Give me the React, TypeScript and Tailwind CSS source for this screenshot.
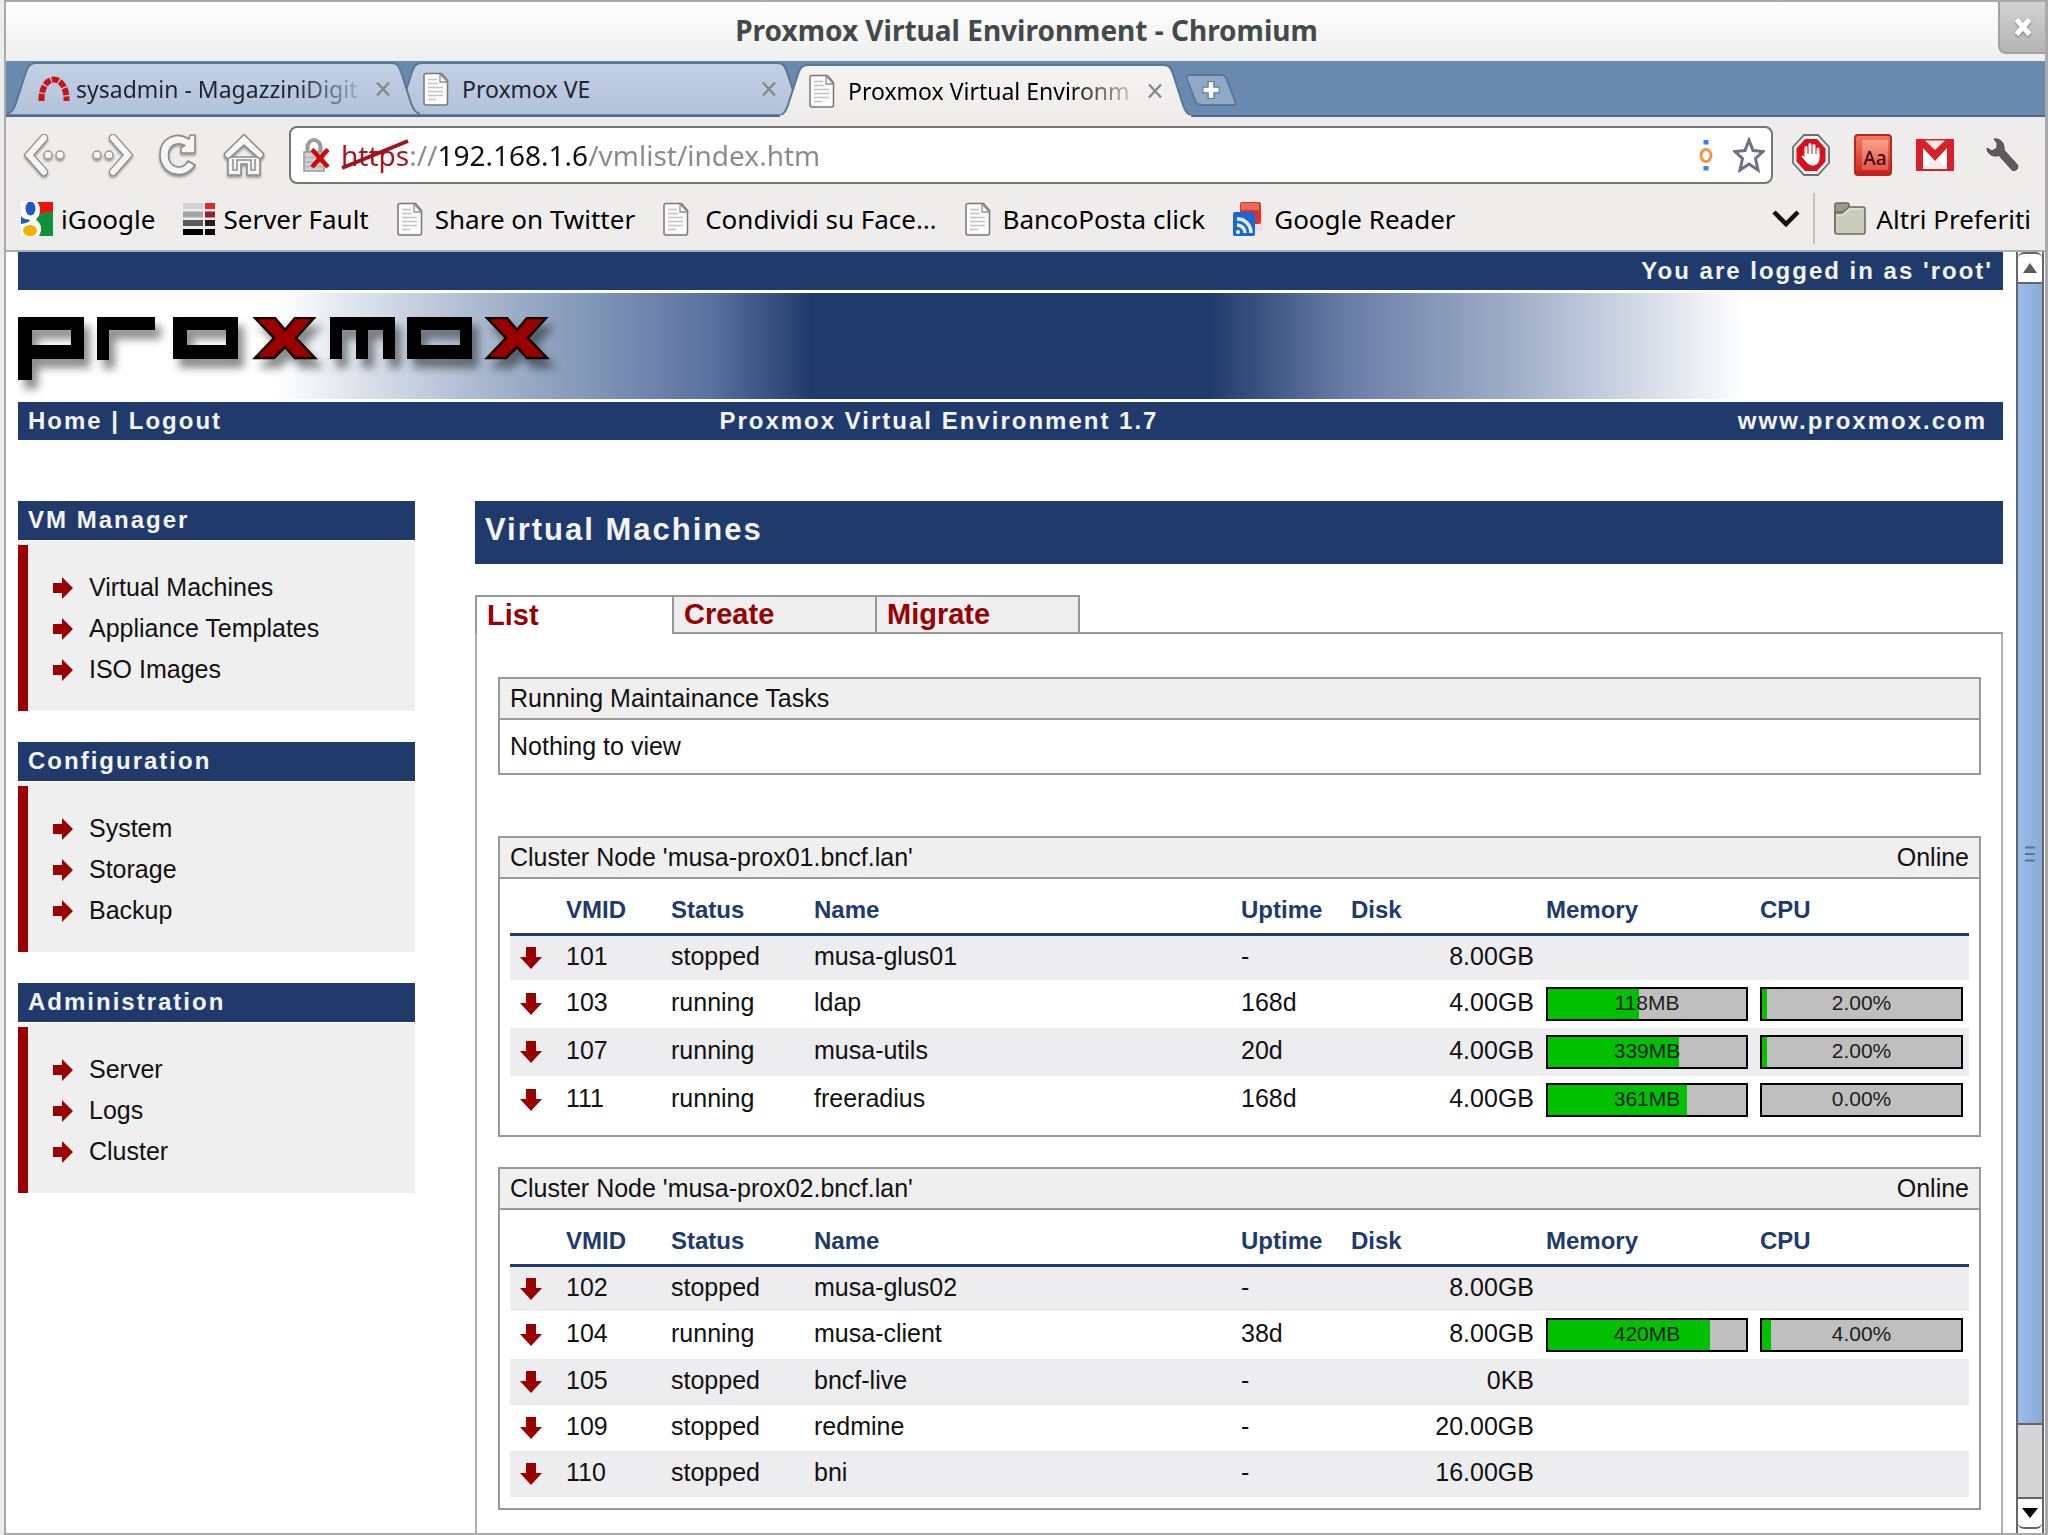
import React from "react";

type Vm = {
  id: string;
  status: string;
  name: string;
  uptime: string;
  disk: string;
  mem?: { label: string; pct: number };
  cpu?: { label: string; pct: number };
};

const node1: Vm[] = [
  { id: "101", status: "stopped", name: "musa-glus01", uptime: "-", disk: "8.00GB" },
  { id: "103", status: "running", name: "ldap", uptime: "168d", disk: "4.00GB", mem: { label: "118MB", pct: 46 }, cpu: { label: "2.00%", pct: 2.5 } },
  { id: "107", status: "running", name: "musa-utils", uptime: "20d", disk: "4.00GB", mem: { label: "339MB", pct: 66 }, cpu: { label: "2.00%", pct: 2.5 } },
  { id: "111", status: "running", name: "freeradius", uptime: "168d", disk: "4.00GB", mem: { label: "361MB", pct: 70 }, cpu: { label: "0.00%", pct: 0 } },
];

const node2: Vm[] = [
  { id: "102", status: "stopped", name: "musa-glus02", uptime: "-", disk: "8.00GB" },
  { id: "104", status: "running", name: "musa-client", uptime: "38d", disk: "8.00GB", mem: { label: "420MB", pct: 82 }, cpu: { label: "4.00%", pct: 4.3 } },
  { id: "105", status: "stopped", name: "bncf-live", uptime: "-", disk: "0KB" },
  { id: "109", status: "stopped", name: "redmine", uptime: "-", disk: "20.00GB" },
  { id: "110", status: "stopped", name: "bni", uptime: "-", disk: "16.00GB" },
];

const menus = [
  { title: "VM Manager", items: ["Virtual Machines", "Appliance Templates", "ISO Images"] },
  { title: "Configuration", items: ["System", "Storage", "Backup"] },
  { title: "Administration", items: ["Server", "Logs", "Cluster"] },
];

function PageIcon() {
  return (
    <svg viewBox="0 0 26 34" className="h-[34px] w-[26px] shrink-0" aria-hidden="true">
      <path d="M3 1.500h15.500l6 7v22.500a2 2 0 0 1-2 2h-19.500a2 2 0 0 1-2-2v-27.500a2 2 0 0 1 2-2z" fill="#fbfbfb" stroke="#77777b" strokeWidth="1.500" />
      <path d="M17 2v8h7.500z" fill="#ffffff" stroke="#909090" strokeWidth="1.300" />
      <path d="M5 7.500h9M5 11.500h10M5 15.500h15M5 19.500h15M5 23.500h15M5 27.500h8" stroke="#c4c4c6" strokeWidth="1.600" />
    </svg>
  );
}

function Cross({ className }: { className: string }) {
  return (
    <svg viewBox="0 0 16 16" className={className} aria-hidden="true">
      <path d="M2 1.500L14 14.500M14 1.500L2 14.500" stroke="currentColor" strokeWidth="2.400" />
    </svg>
  );
}

function RedmineIcon() {
  return (
    <svg viewBox="0 0 34 26" className="h-[26px] w-[34px] shrink-0" aria-hidden="true">
      <path d="M4.500 25C4 12 10 3.500 17 3.500S30 12 29.500 25" fill="none" stroke="#c8141c" strokeWidth="6" strokeDasharray="7 1.400" />
    </svg>
  );
}

function TabShape({ active }: { active: boolean }) {
  return (
    <svg viewBox="0 0 415 54" preserveAspectRatio="none" className="absolute inset-0 h-full w-full" aria-hidden="true">
      <defs>
        <linearGradient id={active ? "tabOn" : "tabOff"} x1="0" y1="0" x2="0" y2="1">
          <stop offset="0" stopColor={active ? "#f4f4f3" : "#c3d1e5"} />
          <stop offset="1" stopColor={active ? "#efedec" : "#b2c2d9"} />
        </linearGradient>
      </defs>
      <path
        d="M1 53C6 52 8 48 10 42L20 11C22 5 24 2 30 2H386C391 2 393 5 395 11L405 42C407 48 409 52 414 53"
        fill={active ? "url(#tabOn)" : "url(#tabOff)"}
        stroke="#5d7595"
        strokeWidth="2"
      />
      {active && <path d="M2 53.500H413" stroke="#efedec" strokeWidth="2.500" />}
    </svg>
  );
}

function BrowserTab({ title, icon, active = false, faded = false, z }: { title: string; icon: React.ReactNode; active?: boolean; faded?: boolean; z: string }) {
  return (
    <div className={"relative -mr-[29px] h-[54px] w-[415px] shrink-0 " + z}>
      <TabShape active={active} />
      <div className="relative flex h-full items-center pt-0.5 pr-[28px] pl-[31px]">
        <button type="button" role="tab" aria-selected={active} className="flex min-w-0 flex-1 items-center text-left">
          <span className="flex w-[39px] shrink-0">{icon}</span>
          <span
            className={
              "whitespace-nowrap text-[23px] leading-8 " +
              (active ? "text-black " : "text-[#1c2433] ") +
              (faded ? "[mask-image:linear-gradient(to_right,black_78%,rgb(0_0_0/0.2)_100%)]" : "")
            }
          >
            {title}
          </span>
        </button>
        <button type="button" aria-label={"Close " + title} className="ml-3 flex w-5 shrink-0 justify-center text-[#85898f]">
          <Cross className="h-4 w-4" />
        </button>
      </div>
    </div>
  );
}

const navShadow = "drop-shadow-[0_2px_1px_rgba(0,0,0,0.35)]";

function BackIcon({ flip = false }: { flip?: boolean }) {
  return (
    <svg viewBox="0 0 42 42" className={"h-[42px] w-[42px] " + navShadow + (flip ? " -scale-x-100" : "")} aria-hidden="true">
      <path d="M20 4L5 21L20 38" fill="none" stroke="#8c8c8c" strokeWidth="8.500" strokeLinecap="round" />
      <path d="M20 4L5 21L20 38" fill="none" stroke="#f5f5f5" strokeWidth="6" strokeLinecap="round" />
      <circle cx="24" cy="21" r="4" fill="#f5f5f5" stroke="#9a9a9a" strokeWidth="1.500" />
      <circle cx="36" cy="21" r="4" fill="#f5f5f5" stroke="#9a9a9a" strokeWidth="1.500" />
    </svg>
  );
}

function ReloadIcon() {
  return (
    <svg viewBox="0 0 40 44" className={"h-[44px] w-[40px] " + navShadow} aria-hidden="true">
      <path
        d="M37 2V20H23V14.500L27 12.500C18 8 10.500 13 10.500 22.500C10.500 34 24 38.500 30 28L37 32C27 49 2 42 2 22C2 4 19-2 31 6L32 2Z"
        fill="#f5f5f5"
        stroke="#8c8c8c"
        strokeWidth="1.600"
        strokeLinejoin="round"
      />
    </svg>
  );
}

function HomeIcon() {
  return (
    <svg viewBox="0 0 42 44" className={"h-[44px] w-[42px] " + navShadow} aria-hidden="true">
      <path d="M5 24H37V42H24V31H18V42H5Z" fill="#f5f5f5" stroke="#8c8c8c" strokeWidth="1.600" />
      <path d="M10 26V37H14V27H28V37H32V26" fill="none" stroke="#8c8c8c" strokeWidth="1.500" />
      <path d="M21 1.500L40 20C42 23 38 27 35 24.500L21 12L7 24.500C4 27 0 23 2 20Z" fill="#f7f7f7" stroke="#8c8c8c" strokeWidth="1.600" strokeLinejoin="round" />
    </svg>
  );
}

function BrokenLock() {
  return (
    <svg viewBox="0 0 28 36" className="h-[36px] w-[28px] shrink-0" aria-hidden="true">
      <path d="M4.500 17V10a6.500 7 0 0 1 13 0V17" fill="none" stroke="#9c9c9c" strokeWidth="4" />
      <rect x="1" y="15" width="20" height="19" fill="#d2d2d2" stroke="#9a9a9a" strokeWidth="1.500" />
      <path d="M2 20.500H20M2 25H20M2 29.500H20" stroke="#b2b2b2" strokeWidth="1.500" />
      <path d="M9 12.500L25 30M25 12.500L9 30" stroke="#cc0a10" strokeWidth="4.500" />
    </svg>
  );
}

function GoogleIcon() {
  return (
    <svg viewBox="0 0 32 34" className="h-[34px] w-[32px] shrink-0" aria-hidden="true">
      <rect width="32" height="34" rx="1" fill="#ffffff" />
      <path d="M16 0H32V11C26 9 20 11 17 16C20 10 20 4 16 0Z" fill="#ee1111" />
      <path d="M32 10V34H18C22 27 20 21 15 18C18 12 25 9 32 10Z" fill="#12913c" />
      <path d="M0 14C3 18 7 17 9 18C8 21 4 21 0 22Z" fill="#2457c5" />
      <ellipse cx="9.500" cy="6.500" rx="5" ry="7" fill="#2457c5" />
      <ellipse cx="9" cy="28.500" rx="7" ry="5.500" fill="#f2b000" />
    </svg>
  );
}

function ServerFaultIcon() {
  return (
    <svg viewBox="0 0 32 32" className="h-8 w-8 shrink-0" aria-hidden="true">
      <rect x="0" y="0" width="20" height="6" fill="#cdd1d3" />
      <rect x="22" y="0" width="10" height="6" fill="#e3252f" />
      <rect x="0" y="8.500" width="20" height="6" fill="#a3a6a8" />
      <rect x="22" y="8.500" width="10" height="6" fill="#94202a" />
      <rect x="0" y="17" width="20" height="6" fill="#575a5a" />
      <rect x="22" y="17" width="10" height="6" fill="#2a1718" />
      <rect x="0" y="26" width="20" height="6" fill="#000000" />
      <rect x="22" y="26" width="10" height="6" fill="#000000" />
    </svg>
  );
}

function ReaderIcon() {
  return (
    <svg viewBox="0 0 31 34" className="h-[34px] w-[31px] shrink-0" aria-hidden="true">
      <rect x="20" y="6" width="10" height="23" fill="#e6e0e0" />
      <rect x="7" y="0" width="21" height="22" rx="2" fill="#d9362c" />
      <rect x="8" y="1" width="18" height="7" fill="#e8695c" />
      <rect x="0" y="10" width="22" height="24" rx="2" fill="#1a66d2" />
      <path d="M4 17a13 14 0 0 1 14 14M4 23a8 8 0 0 1 8 8" fill="none" stroke="#e6effb" strokeWidth="3.500" />
      <circle cx="5" cy="30" r="2" fill="#ffffff" />
    </svg>
  );
}

function FolderIcon() {
  return (
    <svg viewBox="0 0 32 34" className="h-[34px] w-[32px] shrink-0" aria-hidden="true">
      <path d="M1 30V3a2 2 0 0 1 2-2H13a2 2 0 0 1 2 2V10H1" fill="#9a9d8c" stroke="#6b6e60" strokeWidth="1.600" />
      <path d="M1 11H8L15 5H29a2 2 0 0 1 2 2V30a2 2 0 0 1-2 2H3a2 2 0 0 1-2-2Z" fill="#c9ccba" stroke="#6b6e60" strokeWidth="1.600" />
      <path d="M3 13H9L16 7H29" fill="none" stroke="#e2e4d8" strokeWidth="1.500" />
    </svg>
  );
}

function AdblockIcon() {
  return (
    <svg viewBox="0 0 38 42" className="h-[42px] w-[38px]" aria-hidden="true">
      <path d="M12 1H26L37 13V29L26 41H12L1 29V13Z" fill="#f2f2f2" stroke="#6e6e6e" strokeWidth="1.800" />
      <path d="M13 5H25L33.500 14.500V27.500L25 37H13L4.500 27.500V14.500Z" fill="#d9101c" />
      <path d="M14 21V13.500M18 20V10.500M22 20V11.500M26 22V15" stroke="#ffffff" strokeWidth="3" strokeLinecap="round" />
      <path d="M12.500 20H27.500V24C27.500 29 24.500 31.500 20.500 31.500C16 31.500 14.500 28 9.500 22.500C10.500 20.500 12 21.500 13 23Z" fill="#ffffff" />
    </svg>
  );
}

function DictionaryIcon() {
  return (
    <span className="flex h-[42px] w-[38px] items-end justify-end rounded border-2 border-[#b02a22] bg-linear-to-b from-[#f4795c] to-[#cc1c1c] pr-0.5 pb-1">
      <span className="flex h-[30px] w-[26px] items-end justify-center bg-linear-to-b from-[#f7a08e] to-[#e2564c] text-[19px] leading-6 font-medium text-[#4a0a0a]">Aa</span>
    </span>
  );
}

function GmailIcon() {
  return (
    <svg viewBox="0 0 38 32" className="h-[32px] w-[38px]" aria-hidden="true">
      <rect x="0" y="0" width="38" height="32" fill="#d8202a" />
      <path d="M7 9L19 22L31 9V30H7Z" fill="#ffffff" />
      <path d="M7 30L16 20L19 23L22 20L31 30Z" fill="#f0eeee" />
      <path d="M9 1.500H29L19 11Z" fill="#fbeaea" />
    </svg>
  );
}

function WrenchIcon() {
  return (
    <svg viewBox="0 0 34 34" className="h-[34px] w-[34px]" aria-hidden="true">
      <path d="M8 1C14 0 19 5 18 12L31.500 27C33 31 29 34 26 32L13 17.500C7 19.500 1 16 1 10L6 13L11 10L11 5Z" fill="#5d5d5f" stroke="#4b4b4d" strokeWidth="1" strokeLinejoin="round" />
    </svg>
  );
}

function StarIcon() {
  return (
    <svg viewBox="0 0 32 36" className="h-9 w-8" aria-hidden="true">
      <path d="M16 3L20 13.500L30 14.500L22.500 21.500L25 33L16 27L7 33L9.500 21.500L2 14.500L12 13.500Z" fill="#ffffff" stroke="#6d7186" strokeWidth="3" />
    </svg>
  );
}

function LocationDots() {
  return (
    <svg viewBox="0 0 14 32" className="h-8 w-[14px] shrink-0" aria-hidden="true">
      <rect x="4.500" y="1" width="5" height="4.500" fill="#3f7ff0" />
      <ellipse cx="7" cy="16.500" rx="5" ry="6" fill="#ffffff" stroke="#f79443" strokeWidth="3" />
      <rect x="4.500" y="27" width="5" height="4.500" fill="#3f7ff0" />
    </svg>
  );
}

const blackGlyphs = [
  { id: "p", d: [[0, 0, 66, 13], [0, 28, 66, 14], [0, 0, 14, 63], [53, 0, 13, 42]] },
  { id: "r", d: [[79, 0, 58, 13], [79, 0, 12, 43]] },
  { id: "o", d: [[155, 0, 65, 13], [155, 28, 65, 14], [155, 0, 14, 42], [208, 0, 12, 42]] },
  { id: "m", d: [[312, 0, 65, 13], [312, 0, 12, 42], [338, 0, 12, 42], [365, 0, 12, 42]] },
  { id: "o2", d: [[389, 0, 65, 13], [389, 28, 65, 14], [389, 0, 14, 42], [442, 0, 12, 42]] },
];

function ProxmoxLogo() {
  return (
    <svg viewBox="0 0 550 84" className="h-[84px] w-[550px] drop-shadow-[6px_9px_4px_rgba(0,0,0,0.45)]" role="img" aria-label="proxmox">
      {blackGlyphs.map((g) => g.d.map((r, i) => <rect key={g.id + i} x={r[0]} y={r[1]} width={r[2]} height={r[3]} fill="#000000" />))}
      {[236, 468].map((x) => (
        <polygon
          key={x}
          points={[[1, 1], [21, 1], [31, 13], [41, 1], [60, 1], [42, 21], [61, 41], [41, 41], [31, 30], [20, 41], [1, 41], [20, 21]].map((p) => p[0] + x + "," + p[1]).join(" ")}
          fill="#9b0000"
          stroke="#120000"
          strokeWidth="2.500"
        />
      ))}
    </svg>
  );
}

function ArrowRight() {
  return (
    <svg viewBox="0 0 20 22" className="h-[22px] w-5 shrink-0" aria-hidden="true">
      <path d="M0 6H9V0L20 11L9 22V16H0Z" fill="#990000" />
    </svg>
  );
}

function ArrowDown() {
  return (
    <svg viewBox="0 0 22 22" className="h-[22px] w-[22px]" aria-hidden="true">
      <path d="M6 0V10H0L11 22L22 10H16V0Z" fill="#990000" />
    </svg>
  );
}

function Meter({ label, pct }: { label: string; pct: number }) {
  return (
    <div className="relative h-[34px] border-2 border-black bg-[#c0bfc0]" role="meter" aria-valuenow={pct} aria-valuemin={0} aria-valuemax={100} aria-label={label}>
      <div className="h-full bg-[#00c000]" style={{ width: pct + "%" }} />
      <span className="absolute inset-0 text-center text-[21px] leading-7 text-[#1c1c1c]">{label}</span>
    </div>
  );
}

function ClusterNode({ name, vms }: { name: string; vms: Vm[] }) {
  return (
    <section className="mb-[30px] border-2 border-[#9a999a] last:mb-[22px]">
      <header className="flex h-[41px] items-center justify-between border-b-2 border-[#9a999a] bg-[#f0eff0] px-2.5 pb-0.5">
        <h2>Cluster Node '{name}'</h2>
        <span>Online</span>
      </header>
      <div className="px-2.5 pb-[11px]">
        <table className="w-full table-fixed border-collapse">
          <colgroup>
            <col className="w-14" />
            <col className="w-[105px]" />
            <col className="w-[143px]" />
            <col />
            <col className="w-[110px]" />
            <col className="w-[195px]" />
            <col className="w-[214px]" />
            <col className="w-[209px]" />
          </colgroup>
          <thead>
            <tr className="h-[55px] border-b-3 border-[#203a6b] text-left text-[24px] text-[#203a6b] [&>th]:pt-2">
              <th aria-label="Menu" />
              <th>VMID</th>
              <th>Status</th>
              <th>Name</th>
              <th>Uptime</th>
              <th>Disk</th>
              <th>Memory</th>
              <th>CPU</th>
            </tr>
          </thead>
          <tbody>
            {vms.map((vm, i) => (
              <tr key={vm.id} className={(vm.mem ? "h-12 " : "h-[46px] ") + (i % 2 === 0 ? "bg-[#edecee]" : "")}>
                <td className="pl-2.5">
                  <button type="button" aria-label={"Menu for " + vm.name} className="block">
                    <ArrowDown />
                  </button>
                </td>
                <td className="pb-1">{vm.id}</td>
                <td className="pb-1">{vm.status}</td>
                <td className="pb-1">{vm.name}</td>
                <td className="pb-1">{vm.uptime}</td>
                <td className="pr-3 pb-1 text-right">{vm.disk}</td>
                <td className="pr-3">{vm.mem && <Meter label={vm.mem.label} pct={vm.mem.pct} />}</td>
                <td className="pr-1.5">{vm.cpu && <Meter label={vm.cpu.label} pct={vm.cpu.pct} />}</td>
              </tr>
            ))}
          </tbody>
        </table>
      </div>
    </section>
  );
}

function Bookmark({ icon, label, className }: { icon: React.ReactNode; label: string; className: string }) {
  return (
    <a href="#" className={"flex shrink-0 items-center whitespace-nowrap " + className}>
      {icon}
      {label}
    </a>
  );
}

function BrowserChrome() {
  return (
    <div className="font-['Noto_Sans',sans-serif] text-black">
      <div className="flex h-[61px] items-start border-t-2 border-[#a8a8a8] bg-linear-to-b from-white to-[#eeeeee]">
        <div className="w-[49px]" />
        <h1 className="flex-1 text-center text-[28px] leading-[56px] font-bold text-[#444a4a]">Proxmox Virtual Environment - Chromium</h1>
        <button type="button" aria-label="Close window" className="flex h-[52px] w-[47px] items-center justify-center rounded-bl-lg border-b-2 border-l-2 border-[#a2a2a2] bg-linear-to-b from-[#d2d2d2] to-[#b4b4b4] text-white">
          <svg viewBox="0 0 18 20" className="h-5 w-[18px] drop-shadow-[0_1px_1px_rgba(0,0,0,0.4)]" aria-hidden="true">
            <path d="M2.500 2.500L15.500 17.500M15.500 2.500L2.500 17.500" stroke="currentColor" strokeWidth="5" />
          </svg>
        </button>
      </div>

      <div role="tablist" className="flex h-14 items-end border-b-2 border-[#53658a] bg-[#698aae]">
        <BrowserTab z="z-20" title="sysadmin - MagazziniDigit" icon={<RedmineIcon />} faded />
        <BrowserTab z="z-10" title="Proxmox VE" icon={<PageIcon />} />
        <BrowserTab z="z-30 -mb-0.5" title="Proxmox Virtual Environm" icon={<PageIcon />} active faded />
        <button type="button" aria-label="New tab" className="mb-[9px] ml-[22px] h-8 w-[51px] shrink-0">
          <svg viewBox="0 0 51 32" className="h-8 w-[51px]" aria-hidden="true">
            <path d="M4 1H35C38 1 40 3 41 6L49 27C50 30 49 31 46 31H16C12 31 10 29 9 26L1 5C0 2 1 1 4 1Z" fill="#8fa9c8" stroke="#5b7597" strokeWidth="1.800" />
            <path d="M25 7V25M16.500 16H33.500" stroke="#5f7897" strokeWidth="7" />
            <path d="M25 8V24M17.500 16H32.500" stroke="#ffffff" strokeWidth="4.500" />
          </svg>
        </button>
      </div>

      <div className="flex h-[76px] items-center bg-[#efedec] pr-[25px] pl-[18px]">
        <div className="flex shrink-0 items-center gap-[25px]">
          <button type="button" aria-label="Back"><BackIcon /></button>
          <button type="button" aria-label="Forward"><BackIcon flip /></button>
          <button type="button" aria-label="Reload"><ReloadIcon /></button>
          <button type="button" aria-label="Home"><HomeIcon /></button>
        </div>
        <div className="ml-6 flex h-[58px] min-w-0 flex-1 items-center rounded-lg border-2 border-[#777576] bg-white pr-1.5 pl-3">
          <BrokenLock />
          <div className="relative ml-2.5 min-w-0 flex-1">
            <input
              aria-label="Address"
              defaultValue="https://192.168.1.6/vmlist/index.htm"
              className="block h-11 w-full bg-transparent bg-[linear-gradient(to_right,#a8141e_68px,#8a8a8a_68px,#8a8a8a_96px,#111111_96px,#111111_247px,#8a8a8a_247px)] bg-clip-text text-[28px] leading-[44px] text-transparent caret-black outline-none"
            />
            <svg viewBox="0 0 68 34" className="pointer-events-none absolute top-1 left-0 h-[34px] w-[68px]" aria-hidden="true">
              <path d="M1 31L67 4" stroke="#a3121c" strokeWidth="4" />
            </svg>
          </div>
          <LocationDots />
          <button type="button" aria-label="Bookmark this page" className="ml-5 shrink-0"><StarIcon /></button>
        </div>
        <div className="ml-[19px] flex shrink-0 items-center gap-6">
          <button type="button" aria-label="AdBlock"><AdblockIcon /></button>
          <button type="button" aria-label="Dictionary"><DictionaryIcon /></button>
          <button type="button" aria-label="Gmail"><GmailIcon /></button>
          <button type="button" aria-label="Settings" className="ml-2"><WrenchIcon /></button>
        </div>
      </div>

      <nav aria-label="Bookmarks" className="flex h-[59px] items-center border-b-2 border-[#acacac] bg-[#efedec] pr-3.5 pb-1.5 pl-[15px] text-[26px] leading-8">
        <Bookmark className="gap-2" icon={<GoogleIcon />} label="iGoogle" />
        <Bookmark className="ml-7 gap-2" icon={<ServerFaultIcon />} label="Server Fault" />
        <Bookmark className="ml-7 gap-3" icon={<PageIcon />} label="Share on Twitter" />
        <Bookmark className="ml-7 gap-4" icon={<PageIcon />} label="Condividi su Face…" />
        <Bookmark className="ml-7 gap-3" icon={<PageIcon />} label="BancoPosta click" />
        <Bookmark className="ml-7 gap-2.5" icon={<ReaderIcon />} label="Google Reader" />
        <button type="button" aria-label="More bookmarks" className="ml-auto shrink-0">
          <svg viewBox="0 0 28 18" className="h-[18px] w-7" aria-hidden="true">
            <path d="M2 2L14 14L26 2" fill="none" stroke="#111111" strokeWidth="4.500" />
          </svg>
        </button>
        <div className="mr-[19px] ml-[13px] h-[51px] w-0.5 bg-[#c4c2c1]" />
        <Bookmark className="gap-2.5" icon={<FolderIcon />} label="Altri Preferiti" />
      </nav>
    </div>
  );
}

function Scrollbar() {
  return (
    <div className="mr-px ml-[13px] flex w-7 shrink-0 flex-col border-x-2 border-[#63666c] pb-1">
      <button type="button" aria-label="Scroll up" className="flex h-8 items-center justify-center rounded-t-md border-y-2 border-[#63666c] bg-white">
        <svg viewBox="0 0 14 10" className="h-2.5 w-3.5" aria-hidden="true"><path d="M7 0L14 10H0Z" fill="#5b5b5b" /></svg>
      </button>
      <div className="flex flex-1 items-center justify-center bg-linear-to-r from-[#9bbdea] to-[#88aad6]">
        <svg viewBox="0 0 10 16" className="h-4 w-2.5" aria-hidden="true"><path d="M0 1.500H10M0 8H10M0 14.500H10" stroke="#56759f" strokeWidth="2" /></svg>
      </div>
      <div className="h-[74px] border-t-2 border-[#63666c] bg-[#d6d4d5]" />
      <button type="button" aria-label="Scroll down" className="flex h-8 items-center justify-center rounded-b-md border-y-2 border-[#63666c] bg-white">
        <svg viewBox="0 0 16 10" className="h-2.5 w-4" aria-hidden="true"><path d="M0 0H16L8 10Z" fill="#000000" /></svg>
      </button>
    </div>
  );
}

const pageTabs = ["List", "Create", "Migrate"];

export default function App() {
  return (
    <div className="flex min-h-screen flex-col bg-[#ececec] pl-1">
      <div className="flex flex-1 flex-col border-r-3 border-b-2 border-l-2 border-[#a9a8ab] bg-white">
        <BrowserChrome />
        <div className="flex flex-1 font-['Liberation_Sans',Arial,sans-serif] text-[25px] leading-7 text-[#111111]">
          <div className="flex min-w-0 flex-1 flex-col pl-3">
            <div className="h-[38px] bg-[#203a6b] pr-2.5 text-right text-[24px] leading-[38px] font-bold tracking-[2px] text-[#f2f4f8]">You are logged in as 'root'</div>
            <div className="my-[3px] h-[106px] bg-[linear-gradient(to_right,#ffffff_13%,#94a7c2_26%,#5a719f_35%,#203a6b_40%,#203a6b_60%,#6a7da6_67%,#a4b2ca_76%,#ffffff_87%)] pt-6">
              <ProxmoxLogo />
            </div>
            <div className="grid h-[38px] grid-cols-[30fr_33fr_37fr] bg-[#203a6b] pr-4 pl-2.5 text-[24px] leading-[38px] font-bold tracking-[2px] whitespace-nowrap text-[#f2f4f8]">
              <div>
                <a href="#">Home</a> | <a href="#">Logout</a>
              </div>
              <div className="text-center">Proxmox Virtual Environment 1.7</div>
              <a href="#" className="text-right">www.proxmox.com</a>
            </div>

            <div className="mt-[61px] flex flex-1 gap-[60px]">
              <nav aria-label="Main" className="w-[397px] shrink-0">
                {menus.map((menu) => (
                  <section key={menu.title} className="mb-[31px]">
                    <h2 className="h-[39px] bg-[#203a6b] pl-2.5 text-[24px] leading-[38px] font-bold tracking-[2px] text-[#f2f4f8]">{menu.title}</h2>
                    <div className="mt-px bg-[#f0eff0] pt-1">
                      <ul className="border-l-10 border-[#990000] pt-[22px] pb-[21px] pl-[25px]">
                        {menu.items.map((item) => (
                          <li key={item}>
                            <a href="#" className="flex h-[41px] items-center gap-4">
                              <ArrowRight />
                              <span className="pb-0.5">{item}</span>
                            </a>
                          </li>
                        ))}
                      </ul>
                    </div>
                  </section>
                ))}
              </nav>

              <main className="flex min-w-0 flex-1 flex-col">
                <h1 className="h-[63px] bg-[#203a6b] pl-2.5 text-[31px] leading-[58px] font-bold tracking-[2px] text-[#f2f4f8]">Virtual Machines</h1>
                <div role="tablist" className="mt-[31px] flex h-[39px]">
                  {pageTabs.map((tab, i) => (
                    <button
                      key={tab}
                      type="button"
                      role="tab"
                      aria-selected={i === 0}
                      className={
                        "border-t-2 border-l-2 border-[#9a999a] pb-0.5 pl-2.5 text-left text-[29px] leading-8 font-bold text-[#990000] " +
                        (i === 0 ? "w-[197px] bg-white" : "w-[203px] border-b-2 bg-[#f0eff0]")
                      }
                    >
                      {tab}
                    </button>
                  ))}
                  <div className="flex-1 border-b-2 border-l-2 border-[#9a999a]" />
                </div>
                <div className="flex-1 border-x-2 border-[#b0afb0] pt-[43px] pr-5 pl-[21px]">
                  <section className="mb-[61px] border-2 border-[#9a999a]">
                    <h2 className="flex h-[41px] items-center border-b-2 border-[#9a999a] bg-[#f0eff0] px-2.5 pb-0.5">Running Maintainance Tasks</h2>
                    <p className="flex h-[53px] items-center px-2.5 pb-0.5">Nothing to view</p>
                  </section>
                  <ClusterNode name="musa-prox01.bncf.lan" vms={node1} />
                  <ClusterNode name="musa-prox02.bncf.lan" vms={node2} />
                </div>
              </main>
            </div>
          </div>
          <Scrollbar />
        </div>
      </div>
    </div>
  );
}
